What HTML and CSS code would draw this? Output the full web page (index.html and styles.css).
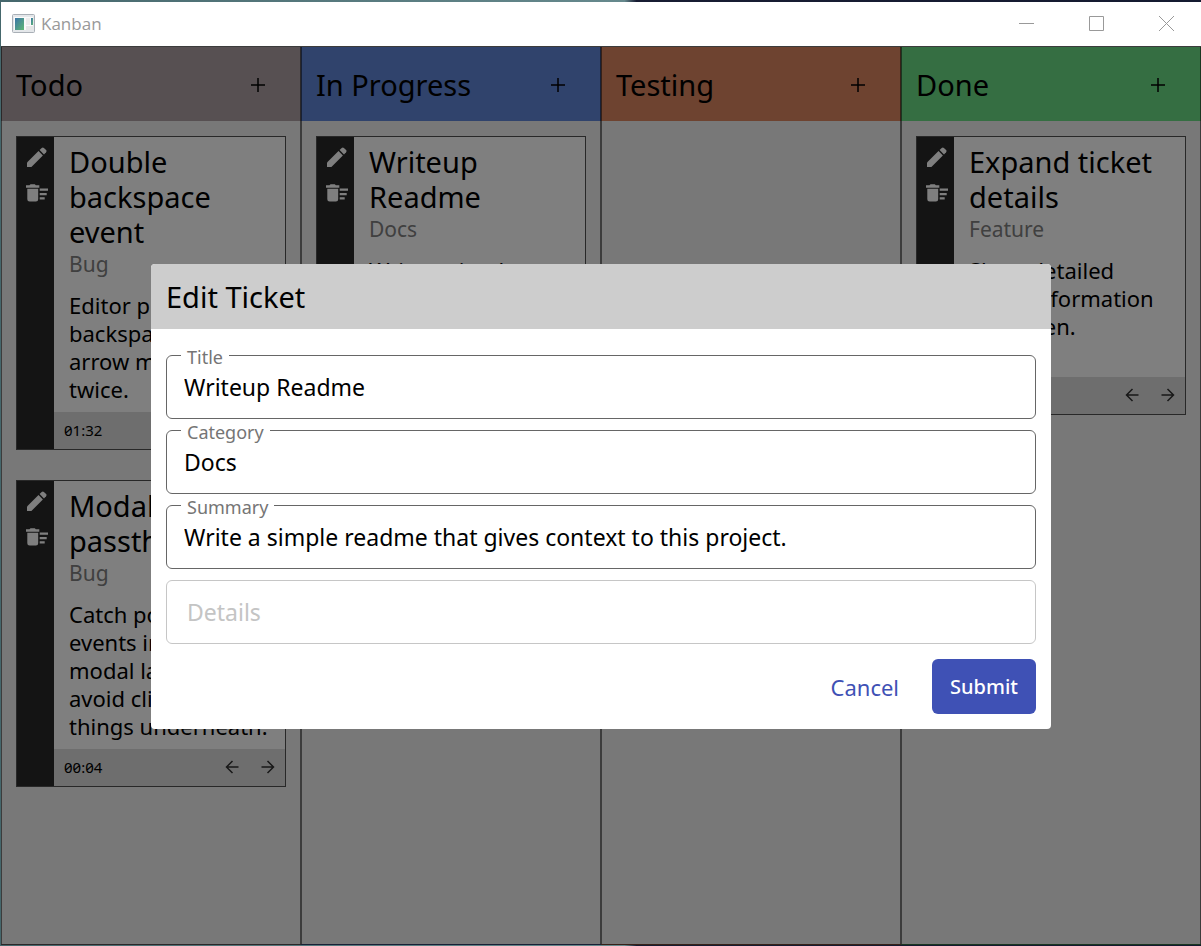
FILE: index.html
```html
<!DOCTYPE html>
<html lang="en">
<head>
<meta charset="utf-8">
<title>Kanban</title>
<link rel="stylesheet" href="styles.css">
</head>
<body>
<svg class="sprite" aria-hidden="true">
  <symbol id="pencil" viewBox="0 0 24 24"><path d="M3 22v-4.400L14.500 6.100l4.400 4.400L7.400 22z"/><path d="M15.600 5l2.100-2.100a1.600 1.600 0 0 1 2.200 0l2.200 2.200a1.600 1.600 0 0 1 0 2.200L20 9.400z"/></symbol>
  <symbol id="sweep" viewBox="0 0 24 24"><path d="M15.700 7.500H24v2.300h-8.300zM15.700 12h7v2.200h-7zM15.700 16.300h5v2.200h-5zM3.300 7.800V18.200a2.300 2.300 0 0 0 2.300 2.300H11.900a2.300 2.300 0 0 0 2.300-2.300V7.800zM15.300 4.200h-3.500l-1-1H6.500l-1 1H2v2.500h13.300z"/></symbol>
  <symbol id="plus" viewBox="0 0 14 14"><path d="M7 0v14M0 7h14"/></symbol>
  <symbol id="left" viewBox="0 0 14 14"><path d="M13.500 7H1.500M7.500 1L1.500 7l6 6"/></symbol>
  <symbol id="right" viewBox="0 0 14 14"><path d="M.5 7h12M6.500 1l6 6-6 6"/></symbol>
</svg>
<div class="window">
  <header class="titlebar">
    <svg class="app-icon" viewBox="0 0 23 19" aria-hidden="true">
      <defs><linearGradient id="pane" x1="0" y1="0" x2="1" y2="1"><stop offset="0" stop-color="#3a74a8"/><stop offset="1" stop-color="#5fb873"/></linearGradient></defs>
      <rect x=".5" y=".5" width="22" height="18" rx="1" fill="#e4e7ea" stroke="#a9afb6"/>
      <rect x="2" y="3" width="19" height="13" fill="#fafafa"/>
      <rect x="3" y="4" width="9" height="12" fill="url(#pane)"/>
      <rect x="14" y="4" width="4" height="7" fill="#ececec"/><rect x="14" y="12" width="7" height="4" fill="#e6e6e6"/>
      <rect x="19" y="4" width="2" height="7" fill="url(#pane)"/>
    </svg>
    <span class="app-name">Kanban</span>
    <div class="window-buttons">
      <button type="button" aria-label="Minimize"><svg viewBox="0 0 15 15"><path d="M0 7.500h15"/></svg></button>
      <button type="button" aria-label="Maximize"><svg viewBox="0 0 15 15"><path d="M.5.5h14v14H.5z"/></svg></button>
      <button type="button" aria-label="Close"><svg viewBox="0 0 15 15"><path d="M0 0l15 15M15 0L0 15"/></svg></button>
    </div>
  </header>
  <div class="app">
    <main class="board">
      <section class="column todo">
        <header class="column-head"><h2>Todo</h2><button type="button" aria-label="Add to Todo"><svg><use href="#plus"/></svg></button></header>
        <div class="cards">
          <article class="card">
            <div class="tools"><button type="button" aria-label="Edit"><svg><use href="#pencil"/></svg></button><button type="button" aria-label="Delete"><svg><use href="#sweep"/></svg></button></div>
            <div class="body"><h3>Double backspace event</h3><p class="category">Bug</p><p class="summary">Editor processes backspace and arrow movement twice.</p></div>
            <footer><time>01:32</time><button type="button" aria-label="Move left"><svg><use href="#left"/></svg></button><button type="button" aria-label="Move right"><svg><use href="#right"/></svg></button></footer>
          </article>
          <article class="card">
            <div class="tools"><button type="button" aria-label="Edit"><svg><use href="#pencil"/></svg></button><button type="button" aria-label="Delete"><svg><use href="#sweep"/></svg></button></div>
            <div class="body"><h3>Modal passthrough</h3><p class="category">Bug</p><p class="summary">Catch pointer<br>events inside<br>modal layer to<br>avoid clicking<br>things underneath.</p></div>
            <footer><time>00:04</time><button type="button" aria-label="Move left"><svg><use href="#left"/></svg></button><button type="button" aria-label="Move right"><svg><use href="#right"/></svg></button></footer>
          </article>
        </div>
      </section>
      <section class="column progress">
        <header class="column-head"><h2>In Progress</h2><button type="button" aria-label="Add to In Progress"><svg><use href="#plus"/></svg></button></header>
        <div class="cards">
          <article class="card">
            <div class="tools"><button type="button" aria-label="Edit"><svg><use href="#pencil"/></svg></button><button type="button" aria-label="Delete"><svg><use href="#sweep"/></svg></button></div>
            <div class="body"><h3>Writeup Readme</h3><p class="category">Docs</p><p class="summary">Write a simple readme that gives context to this project.</p></div>
            <footer><time>00:00</time><button type="button" aria-label="Move left"><svg><use href="#left"/></svg></button><button type="button" aria-label="Move right"><svg><use href="#right"/></svg></button></footer>
          </article>
        </div>
      </section>
      <section class="column testing">
        <header class="column-head"><h2>Testing</h2><button type="button" aria-label="Add to Testing"><svg><use href="#plus"/></svg></button></header>
      </section>
      <section class="column done">
        <header class="column-head"><h2>Done</h2><button type="button" aria-label="Add to Done"><svg><use href="#plus"/></svg></button></header>
        <div class="cards">
          <article class="card">
            <div class="tools"><button type="button" aria-label="Edit"><svg><use href="#pencil"/></svg></button><button type="button" aria-label="Delete"><svg><use href="#sweep"/></svg></button></div>
            <div class="body"><h3>Expand ticket details</h3><p class="category">Feature</p><p class="summary">Show detailed ticket information on screen.</p></div>
            <footer><time>00:00</time><button type="button" aria-label="Move left"><svg><use href="#left"/></svg></button><button type="button" aria-label="Move right"><svg><use href="#right"/></svg></button></footer>
          </article>
        </div>
      </section>
    </main>
    <div class="backdrop">
      <form class="modal" role="dialog" aria-labelledby="modal-title">
        <h1 id="modal-title">Edit Ticket</h1>
        <div class="fields">
          <div class="field"><label for="title">Title</label><input id="title" type="text" value="Writeup Readme"></div>
          <div class="field"><label for="category">Category</label><input id="category" type="text" value="Docs"></div>
          <div class="field"><label for="summary">Summary</label><input id="summary" type="text" value="Write a simple readme that gives context to this project."></div>
          <div class="field empty"><input id="details" type="text" placeholder="Details" aria-label="Details"></div>
        </div>
        <div class="actions"><button class="cancel" type="button">Cancel</button><button class="submit" type="button">Submit</button></div>
      </form>
    </div>
  </div>
</div>
</body>
</html>
```
FILE: styles.css
```css
* { box-sizing: border-box; margin: 0; }
body {
  min-height: 100vh;
  display: flex;
  padding: 2px 0 1px 1px;
  background: linear-gradient(90deg, #45676c, #66898d 52%, #171c32 53%, #141a30);
  font-family: "Noto Sans", "Open Sans", sans-serif;
  color: #000;
}
.sprite { position: absolute; width: 0; height: 0; }
button { border: 0; padding: 0; background: none; font: inherit; color: inherit; display: flex; align-items: center; justify-content: center; }
.window { flex: 1; min-width: 0; display: flex; flex-direction: column; }

.titlebar { height: 44px; display: flex; align-items: center; background: #fff; padding-left: 11px; }
.app-icon { width: 23px; height: 19px; margin-bottom: 2px; }
.app-name { margin-left: 6px; font-family: "Open Sans", sans-serif; font-size: 17px; line-height: 24px; color: #999; }
.window-buttons { margin-left: auto; display: flex; height: 42px; align-self: flex-start; }
.window-buttons button { width: 70px; }
.window-buttons svg { width: 15px; height: 15px; fill: none; stroke: #999; }

.app { position: relative; flex: 1; display: flex; }
.board { flex: 1; display: grid; grid-template-columns: repeat(4, 1fr); }
.column { border: 1px solid rgba(0, 0, 0, .5); min-width: 0; background: linear-gradient(var(--head) 74px, #f0f0f0 74px); }
.todo { --head: #aea0a5; }
.progress { --head: #6086d8; }
.testing { --head: #dc8660; }
.done { --head: #6adc84; }
.column-head { height: 74px; display: flex; align-items: center; justify-content: space-between; padding: 2px 35px 0 14px; }
.column-head h2 { font-size: 29px; font-weight: 400; line-height: 36px; }
.column-head svg { width: 14px; height: 14px; fill: none; stroke: #000; stroke-width: 1.5; }
.cards { display: flex; flex-direction: column; gap: 30px; padding: 15px 14px; }

.card { display: grid; grid-template-columns: 37px 1fr; grid-template-rows: 1fr auto; border: 1px solid #505050; background: #fff; }
.tools { grid-row: 1 / 3; background: #282828; display: flex; flex-direction: column; align-items: center; gap: 12px; padding: 8px 0 0 1px; }
.tools svg { width: 24px; height: 24px; fill: #fff; }
.body { min-width: 0; padding: 7px 9px 9px 15px; }
.body h3 { font-size: 29px; font-weight: 400; line-height: 35px; }
.category { font-size: 21px; line-height: 30px; color: #808080; }
.summary { margin-top: 12px; min-height: 112px; font-size: 22px; line-height: 28px; }
.card footer { height: 37px; display: flex; align-items: center; gap: 22px; padding: 0 10px 2px; background: #dcdcdc; }
.card time { margin-right: auto; font-size: 15px; font-variant-numeric: slashed-zero; }
.card footer svg { width: 14px; height: 14px; fill: none; stroke: #303030; stroke-width: 1.5; }

.backdrop { position: absolute; inset: 0; display: flex; align-items: center; justify-content: center; padding-top: 2px; background: rgba(0, 0, 0, .5); }
.modal { width: 75%; background: #fff; border-radius: 4px; overflow: hidden; }
.modal h1 { padding: 15px; background: #cdcdcd; font-size: 29px; font-weight: 400; line-height: 35px; }
.fields { display: flex; flex-direction: column; gap: 11px; padding: 26px 15px 15px; }
.field { position: relative; }
.field label { position: absolute; left: 15px; top: -12px; padding: 0 6px; background: #fff; font-size: 18px; line-height: 24px; color: #757575; }
.field input { display: block; width: 100%; height: 64px; border: 1px solid #666; border-radius: 6px; padding: 0 17px; background: none; font: inherit; font-size: 23px; color: #000; outline: 0; }
.field.empty input { border-color: #c6c6c6; padding: 0 20px; }
.field input::placeholder { color: #c4c4c4; opacity: 1; }
.field label { top: -10px; }
.actions { display: flex; justify-content: flex-end; gap: 15px; padding: 0 15px 15px; }
.actions button { height: 55px; padding: 0 18px; border-radius: 6px; }
.actions .cancel { color: #3f51b5; font-size: 22px; }
.actions .submit { background: #3f51b5; color: #fff; font-size: 20px; font-weight: 500; }
```
